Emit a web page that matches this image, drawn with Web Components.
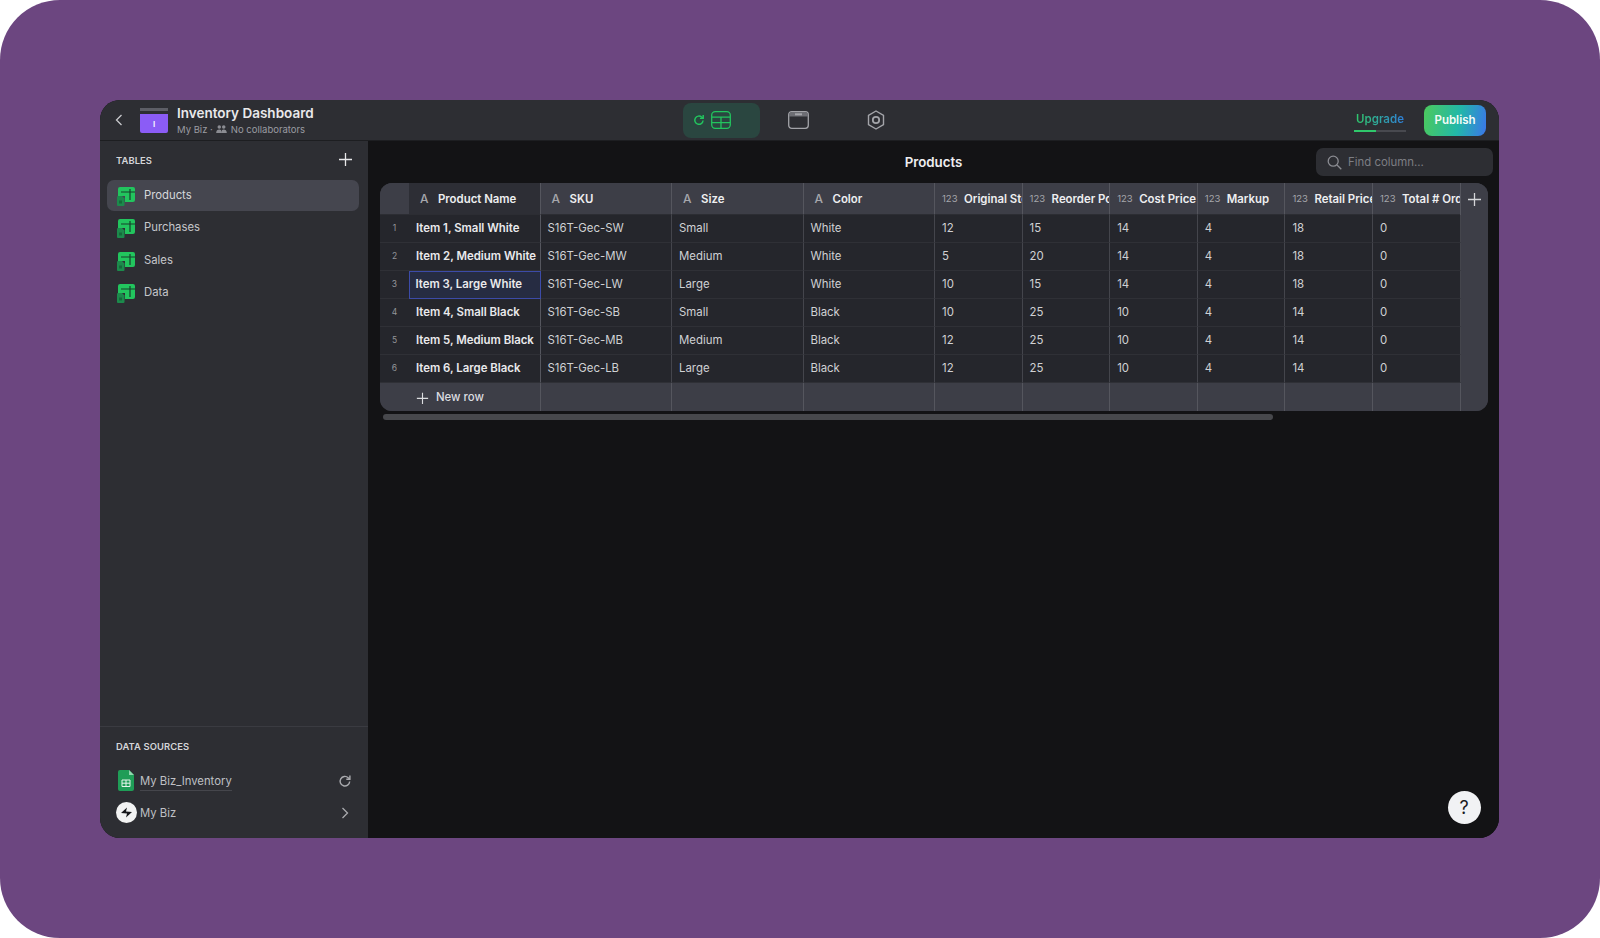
<!DOCTYPE html>
<html lang="en">
<head>
<meta charset="utf-8">
<title>Inventory Dashboard</title>
<style>
    html, body {
        margin: 0;
        background: #fff;
        font-family: Inter, "Liberation Sans", sans-serif;
    }
</style>
</head>
<body>
<app-frame>
    <top-bar slot="top" title="Inventory Dashboard" org="My Biz"></top-bar>
    <side-bar slot="side"></side-bar>
    <main-panel slot="main"></main-panel>
</app-frame>

<script>
const ICONS = {
    table: `<svg width="19" height="20" viewBox="0 0 19 20">
        <path d="M3 0h13a2 2 0 0 1 2 2v11a2 2 0 0 1-2 2H8V9H1V2a2 2 0 0 1 2-2z" fill="#22c55e"/>
        <path d="M4 5h14M13 2v11" stroke="#17402b" stroke-width="1.200" fill="none"/>
        <path d="M1 9h4l2.500 2.500V18a1 1 0 0 1-1 1H1a1 1 0 0 1-1-1v-8a1 1 0 0 1 1-1z" fill="#1c8a4c"/>
        <rect x="2" y="13.500" width="3" height="3" fill="#146b3a"/>
    </svg>`,
    plus: `<svg width="15" height="15" viewBox="0 0 15 15"><path d="M7.500 1v13M1 7.500h13" stroke="currentColor" stroke-width="1.300" fill="none"/></svg>`,
    refresh: `<svg width="14" height="14" viewBox="0 0 14 14" fill="none" stroke="currentColor" stroke-width="1.400"><path d="M11.700 7.500a4.800 4.800 0 1 1-1.500-3.800l1.500 1.300"/><path d="M11.900 1.500v3.700H8.300"/></svg>`,
    chevron: `<svg width="8" height="12" viewBox="0 0 8 12" fill="none" stroke="currentColor" stroke-width="1.300"><path d="M1.500 1l5 5-5 5"/></svg>`,
    search: `<svg width="15" height="15" viewBox="0 0 15 15" fill="none" stroke="#8b8c92" stroke-width="1.300"><circle cx="6.200" cy="6.200" r="5"/><path d="M10 10l4.300 4.300"/></svg>`
};

class AppFrame extends HTMLElement {
    constructor() {
        super();
        this.attachShadow({ mode: 'open' });
        this.shadowRoot.innerHTML = `
            <style>
                :host {
                    display: block;
                    width: 1600px;
                    height: 938px;
                    box-sizing: border-box;
                    padding: 100px 101px 100px 100px;
                    background: #6c4680;
                    border-radius: 60px;
                    overflow: hidden;
                }
                .window {
                    position: relative;
                    height: 100%;
                    display: grid;
                    grid-template-columns: 268px 1fr;
                    grid-template-rows: 41px 1fr;
                    border-radius: 20px;
                    overflow: hidden;
                    background: #131315;
                }
                ::slotted([slot=top]) { grid-column: 1 / 3; }
            </style>
            <div class="window">
                <slot name="top"></slot>
                <slot name="side"></slot>
                <slot name="main"></slot>
            </div>
        `;
    }
}

class TopBar extends HTMLElement {
    constructor() {
        super();
        this.attachShadow({ mode: 'open' });
    }

    connectedCallback() {
        this.shadowRoot.innerHTML = `
            <style>
                :host {
                    display: grid;
                    grid-template-columns: 1fr auto 1fr;
                    align-items: center;
                    background: #2d2e33;
                    border-bottom: 1px solid #1d1e21;
                    box-sizing: border-box;
                    height: 41px;
                    color: #fff;
                }
                .left { display: flex; align-items: center; padding-left: 15px; }
                .back { color: #c9cacd; display: flex; transform: scaleX(-1); margin-right: 17px; }
                .logo { width: 28px; height: 25px; display: flex; flex-direction: column; gap: 3px; margin-right: 9px; margin-top: 1px; }
                .logo i { display: block; height: 3px; background: #5d5e66; }
                .logo b {
                    flex: 1;
                    background: #8b5cf6;
                    border-radius: 0 0 2px 2px;
                    color: #fff;
                    font-size: 8px;
                    font-weight: 600;
                    display: flex;
                    align-items: center;
                    justify-content: center;
                }
                .name { font-size: 13.500px; font-weight: 600; line-height: 16px; color: #e9e9eb; white-space: nowrap; }
                .sub { display: flex; align-items: center; gap: 3px; font-size: 9.500px; line-height: 13px; color: #9b9ca2; margin-top: 2px; white-space: nowrap; }
                .tabs { display: flex; height: 35px; margin: 1px 0 0 -2px; }
                .tab { width: 77px; display: flex; align-items: center; justify-content: center; box-sizing: border-box; padding-bottom: 2px; }
                .tab.on { background: #2a4640; border-radius: 8px; color: #22c55e; justify-content: flex-start; padding-left: 10px; gap: 6px; }
                .right { display: flex; justify-content: flex-end; align-items: center; padding-right: 13px; gap: 18px; }
                .upgrade { width: 52px; height: 31px; display: flex; flex-direction: column; align-items: center; justify-content: flex-end; }
                .upgrade span {
                    font-size: 11.500px;
                    font-weight: 600;
                    background: linear-gradient(90deg, #2fc76b, #2f7fd8);
                    -webkit-background-clip: text;
                    background-clip: text;
                    color: transparent;
                    margin-bottom: 4px;
                    white-space: nowrap;
                }
                .upgrade i { display: block; width: 100%; height: 2px; margin-bottom: 4px; background: linear-gradient(90deg, #2fc76b 0 42%, #48494f 42%); }
                .publish {
                    width: 62px;
                    height: 31px;
                    border-radius: 8px;
                    background: linear-gradient(100deg, #4cc95c, #22b8a8 55%, #3b76ea);
                    display: flex;
                    align-items: center;
                    justify-content: center;
                    font-size: 11.500px;
                    font-weight: 600;
                    color: #f4fbf8;
                }
            </style>
            <div class="left">
                <span class="back">${ICONS.chevron}</span>
                <div class="logo"><i></i><b>I</b></div>
                <div>
                    <div class="name">${this.getAttribute('title')}</div>
                    <div class="sub">${this.getAttribute('org')} ·
                        <svg width="11" height="8" viewBox="0 0 12 9" fill="#8b8c92"><circle cx="3.500" cy="2.300" r="2"/><circle cx="8.500" cy="2.300" r="2"/><path d="M0 9c0-3 1.500-4 3.500-4S6 6 6 9zM6 9c0-3 .7-4 2.500-4S12 6 12 9z"/></svg>
                        <span style="margin-left:1px">No collaborators</span></div>
                </div>
            </div>
            <div class="tabs">
                <div class="tab on">
                    <svg width="12" height="12" viewBox="0 0 14 14" fill="none" stroke="#22c55e" stroke-width="1.700"><path d="M11.700 7.500a4.800 4.800 0 1 1-1.500-3.800l1.500 1.300"/><path d="M11.900 1.200v3.900H8.100"/></svg>
                    <svg width="20" height="18" viewBox="0 0 20 18" fill="none" stroke="#22c55e" stroke-width="1.300"><rect x=".7" y=".7" width="18.600" height="16.600" rx="3.500"/><path d="M.7 6.200h18.600M.7 11.700h18.600M10 6.200v11"/></svg>
                </div>
                <div class="tab">
                    <svg width="21" height="18" viewBox="0 0 21 18" fill="none"><rect x=".7" y=".7" width="19.600" height="16.600" rx="3" stroke="#a3a4a9" stroke-width="1.300"/><path d="M1 4c0-2 1-3 3-3h13c2 0 3 1 3 3v1.500H1z" fill="#6d6e74"/><rect x="7" y="2.300" width="7" height="2" fill="#a3a4a9"/></svg>
                </div>
                <div class="tab">
                    <svg width="18" height="20" viewBox="0 0 18 20" fill="none" stroke="#a3a4a9" stroke-width="1.400"><path d="M9 1l7.500 4.300v9.400L9 19l-7.500-4.300V5.300z" stroke-linejoin="round"/><circle cx="9" cy="10" r="3.200" stroke-width="1.800"/></svg>
                </div>
            </div>
            <div class="right">
                <div class="upgrade"><span>Upgrade</span><i></i></div>
                <div class="publish">Publish</div>
            </div>
        `;
    }
}

class SideItem extends HTMLElement {
    constructor() {
        super();
        this.attachShadow({ mode: 'open' });
        this.shadowRoot.innerHTML = `
            <style>
                :host {
                    display: flex;
                    align-items: center;
                    height: 31px;
                    box-sizing: border-box;
                    margin: 0 9px 0 7px;
                    padding: 0 0 2px 10px;
                    border-radius: 7px;
                    font-size: 11.300px;
                    color: #c6c7cb;
                }
                :host([active]) { background: #45464f; color: #d6d7da; }
                .icon { display: flex; width: 27px; margin-top: 4px; }
            </style>
            <span class="icon">${ICONS.table}</span>
            <slot></slot>
        `;
    }
}

class SourceRow extends HTMLElement {
    constructor() {
        super();
        this.attachShadow({ mode: 'open' });
        this.shadowRoot.innerHTML = `
            <style>
                :host {
                    display: flex;
                    align-items: center;
                    height: 32px;
                    padding: 0 16px 0 15px;
                    font-size: 11.300px;
                    color: #bfc0c4;
                }
                .icon { width: 25px; height: 22px; display: flex; align-items: center; }
                .label { flex: 1; }
                .end { color: #a9aaae; display: flex; width: 14px; justify-content: center; }
            </style>
            <span class="icon"><slot name="icon"></slot></span>
            <span class="label"><slot></slot></span>
            <span class="end"><slot name="end"></slot></span>
        `;
    }
}

class SideBar extends HTMLElement {
    constructor() {
        super();
        this.attachShadow({ mode: 'open' });
        this.shadowRoot.innerHTML = `
            <style>
                :host {
                    display: flex;
                    flex-direction: column;
                    background: #2d2e33;
                    min-height: 0;
                }
                .head {
                    display: flex;
                    justify-content: space-between;
                    align-items: center;
                    height: 39px;
                    padding: 0 15px 0 16px;
                    color: #e8e8ea;
                }
                .head svg { margin-top: -2px; }
                h4 { margin: 0; font-size: 9.400px; font-weight: 600; letter-spacing: .1px; color: #d5d6d9; }
                .list { display: flex; flex-direction: column; gap: 1.500px; }
                .fill { flex: 1; }
                .sources { border-top: 1px solid #3a3b41; padding-bottom: 9.500px; }
                .sources h4 { padding: 14px 0 12px 16px; line-height: 12px; }
                u { text-decoration: none; border-bottom: 1px solid #45464c; padding-bottom: 2px; }
            </style>
            <div class="head"><h4>TABLES</h4>${ICONS.plus}</div>
            <div class="list">
                <side-item active>Products</side-item>
                <side-item>Purchases</side-item>
                <side-item>Sales</side-item>
                <side-item>Data</side-item>
            </div>
            <div class="fill"></div>
            <div class="sources">
                <h4>DATA SOURCES</h4>
                <source-row>
                    <svg slot="icon" style="margin-left:3px" width="16" height="21" viewBox="0 0 16 21"><path d="M2 0h9l5 5v14a2 2 0 0 1-2 2H2a2 2 0 0 1-2-2V2a2 2 0 0 1 2-2z" fill="#1f9d57"/><path d="M11 0l5 5h-5z" fill="#8fd6ad"/><path d="M4 10h8v6.500H4zM4 13.200h8M8 10v6.500" stroke="#e6f5ec" stroke-width="1" fill="none"/></svg>
                    <u>My Biz_Inventory</u>
                    <span slot="end" style="display:flex">${ICONS.refresh}</span>
                </source-row>
                <source-row>
                    <svg slot="icon" style="margin-left:1px" width="21" height="21" viewBox="0 0 21 21"><circle cx="10.500" cy="10.500" r="10.500" fill="#f2f3f3"/><path d="M5 11l6-5.500-1 4 6 .5-6 5.500 1-4z" fill="#17181b"/></svg>
                    My Biz
                    <span slot="end" style="display:flex">${ICONS.chevron}</span>
                </source-row>
            </div>
        `;
    }
}

const COLUMNS = [
    ['A', 'Product Name'], ['A', 'SKU'], ['A', 'Size'], ['A', 'Color'],
    ['123', 'Original Stock'], ['123', 'Reorder Point'], ['123', 'Cost Price'],
    ['123', 'Markup'], ['123', 'Retail Price'], ['123', 'Total # Ordered']
];

const ROWS = [
    ['Item 1, Small White', 'S16T-Gec-SW', 'Small', 'White', 12, 15, 14, 4, 18, 0],
    ['Item 2, Medium White', 'S16T-Gec-MW', 'Medium', 'White', 5, 20, 14, 4, 18, 0],
    ['Item 3, Large White', 'S16T-Gec-LW', 'Large', 'White', 10, 15, 14, 4, 18, 0],
    ['Item 4, Small Black', 'S16T-Gec-SB', 'Small', 'Black', 10, 25, 10, 4, 14, 0],
    ['Item 5, Medium Black', 'S16T-Gec-MB', 'Medium', 'Black', 12, 25, 10, 4, 14, 0],
    ['Item 6, Large Black', 'S16T-Gec-LB', 'Large', 'Black', 12, 25, 10, 4, 14, 0]
];

class DataTable extends HTMLElement {
    constructor() {
        super();
        this.attachShadow({ mode: 'open' });
    }

    connectedCallback() {
        const head = COLUMNS.map((c, i) => `
            <div class="hd${i === 0 ? ' frozen' : ''}">
                <span class="kind${c[0] === 'A' ? ' a' : ''}">${c[0]}</span><span class="title">${c[1]}</span>
            </div>`).join('');
        const body = ROWS.map((row, r) => `
            <div class="num">${r + 1}</div>
            ${row.map((v, i) => `<div class="cell${i === 0 ? ' first' : ''}${r === 2 && i === 0 ? ' sel' : ''}">${v}</div>`).join('')}`).join('');
        const foot = COLUMNS.slice(1).map(() => '<div class="new"></div>').join('');

        this.shadowRoot.innerHTML = `
            <style>
                :host {
                    display: block;
                    margin: 0 11px 0 12px;
                    font-size: 11.400px;
                }
                .grid {
                    display: grid;
                    grid-template-columns: 29px 131.500px 131.500px 131.500px 131.500px repeat(6, 87.600px) 1fr;
                    grid-template-rows: 32px repeat(6, 28px) 28px;
                    background: #3d3e47;
                    border-radius: 12px;
                    overflow: hidden;
                }
                .corner { background: #3d3e47; border-bottom: 1px solid #2c2d33; }
                .hd {
                    display: flex;
                    align-items: center;
                    box-sizing: border-box;
                    padding-left: 7px;
                    gap: 6px;
                    overflow: hidden;
                    white-space: nowrap;
                    background: #3d3e47;
                    border-right: 1px solid #55565e;
                    border-bottom: 1px solid #2c2d33;
                    color: #eeeef0;
                    font-weight: 600;
                }
                .hd.frozen { background: #2d2e35; }
                .kind { color: #a6a7ac; font-weight: 400; font-size: 9.500px; flex: none; width: 16px; }
                .kind.a { font-size: 12px; width: 11px; margin: 0 1px 0 4px; font-weight: 500; }
                .num, .cell {
                    display: flex;
                    align-items: center;
                    box-sizing: border-box;
                    padding-bottom: 2px;
                    background: #25262c;
                    border-bottom: 1px solid #2f3036;
                    white-space: nowrap;
                    overflow: hidden;
                }
                .num { justify-content: center; font-size: 8.500px; color: #94959a; }
                .cell { padding-left: 7px; color: #d0d1d4; border-right: 1px solid #44454c; }
                .first { font-weight: 600; color: #eaeaec; border-right-color: #55565e; }
                .sel { background: #262c42; border: 1.500px solid #3c4ba8; padding-left: 5.500px; padding-bottom: 1.500px; }
                .new, .newhead { background: #3d3e47; border-right: 1px solid #55565e; }
                .add { grid-row: 1 / -1; grid-column: 12; background: #3d3e47; display: flex; justify-content: center; padding-top: 9px; color: #d4d5d8; border-left: 1px solid #55565e; margin-left: -1px; }
                .newhead { grid-column: 1 / 3; display: flex; align-items: center; padding-left: 36px; gap: 7px; color: #dcdde0; font-weight: 500; }
                .bar { height: 6px; width: 890px; margin: 3px 0 0 2.500px; border-radius: 3px; background: #47484c; }
            </style>
            <div class="grid">
                <div class="corner"></div>
                ${head}
                <div class="add">${ICONS.plus}</div>
                ${body}
                <div class="newhead">${ICONS.plus.replace(/15"/g, '13"')}<span>New row</span></div>
                ${foot}
            </div>
            <div class="bar"></div>
        `;
    }
}

class MainPanel extends HTMLElement {
    constructor() {
        super();
        this.attachShadow({ mode: 'open' });
        this.shadowRoot.innerHTML = `
            <style>
                :host {
                    display: block;
                    background: #131315;
                    position: relative;
                    min-height: 0;
                }
                .head {
                    display: grid;
                    grid-template-columns: 1fr auto 1fr;
                    align-items: center;
                    height: 42px;
                    padding: 0 6px 0 0;
                    box-sizing: border-box;
                    margin-left: 6px;
                }
                .title { font-size: 13.300px; font-weight: 600; color: #eeeef0; margin-top: -1px; }
                .search {
                    justify-self: end;
                    width: 177px;
                    height: 28px;
                    box-sizing: border-box;
                    background: #2d2e33;
                    border-radius: 7px;
                    display: flex;
                    align-items: center;
                    gap: 6px;
                    padding-left: 11px;
                    font-size: 11.400px;
                    color: #7d7e84;
                }
                .help {
                    position: absolute;
                    right: 18.500px;
                    bottom: 14px;
                    width: 33px;
                    height: 33px;
                    border-radius: 50%;
                    background: #f1f2f4;
                    color: #1b1c1f;
                    display: flex;
                    align-items: center;
                    justify-content: center;
                    font-size: 18px;
                }
            </style>
            <div class="head">
                <span></span>
                <div class="title">Products</div>
                <div class="search">${ICONS.search}<span>Find column...</span></div>
            </div>
            <data-table></data-table>
            <div class="help">?</div>
        `;
    }
}

customElements.define('app-frame', AppFrame);
customElements.define('top-bar', TopBar);
customElements.define('side-item', SideItem);
customElements.define('source-row', SourceRow);
customElements.define('side-bar', SideBar);
customElements.define('data-table', DataTable);
customElements.define('main-panel', MainPanel);
</script>
</body>
</html>
